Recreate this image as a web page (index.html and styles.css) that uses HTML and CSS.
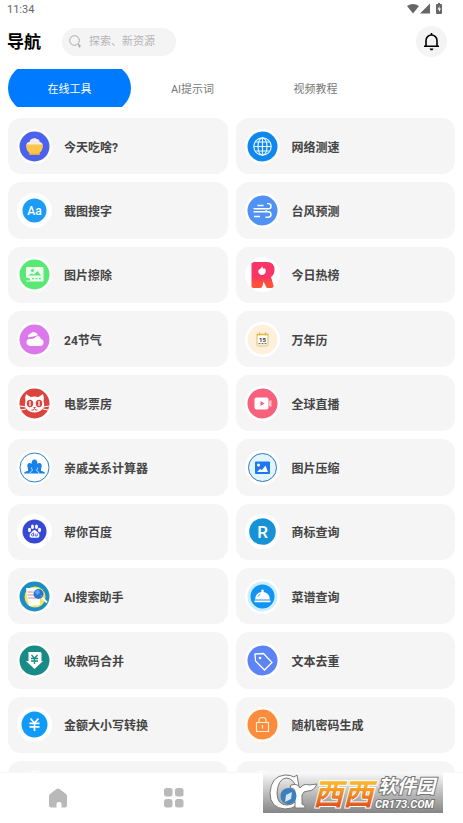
FILE: index.html
```html
<!DOCTYPE html>
<html lang="zh-CN">
<head>
    <meta charset="UTF-8">
    <meta name="viewport" content="width=device-width, initial-scale=1.0">
    <title>导航</title>
    <link rel="stylesheet" href="styles.css">
</head>
<body>
    <div class="status">
        <span>11:34</span>
        <svg width="36" height="12" viewBox="0 0 36 12" fill="#666">
            <path d="M0 3Q6-1 12 3L6 10.500z"/>
            <path d="M13 10.500L23 .500v10z"/>
            <path d="M30 1h1V0h2v1h1q1 0 1 1v8q0 1-1 1h-4q-1 0-1-1V2q0-1 1-1z"/>
            <path d="M32.500 3L30.500 6.500H32V9l2-3.500h-1.500z" fill="#fff"/>
        </svg>
    </div>

    <header class="header">
        <h1>导航</h1>
        <label class="search">
            <svg width="13" height="13" viewBox="0 0 13 13" fill="none" stroke="#aaa">
                <circle cx="5.500" cy="5.500" r="4.800"/>
                <path d="M9 9l1.500 1.500M9 11h3M10.500 9.500v3"/>
            </svg>
            <input type="text" placeholder="探索、新资源" aria-label="探索、新资源">
        </label>
        <button class="bell" aria-label="通知">
            <svg width="17" height="19" viewBox="0 0 17 19" fill="none" stroke="#000" stroke-width="1.600">
                <path d="M8.500 1v2M1 14.200h15M3 14V8.500a5.500 5.500 0 0 1 11 0V14"/>
                <path d="M6.500 16.500h4l-1 1.700h-2z" fill="#000" stroke="none"/>
            </svg>
        </button>
    </header>

    <nav class="tabs">
        <button class="tab active"><span>在线工具</span></button>
        <button class="tab"><span>AI提示词</span></button>
        <button class="tab"><span>视频教程</span></button>
    </nav>

    <main class="tools">
        <a class="card" href="#">
            <svg class="icon" viewBox="0 0 35 35">
                <circle cx="17.500" cy="17.500" r="15" fill="#4b62ee"/>
                <path d="M9.500 16q0-3 3-3 .5-3.500 4-3.500 1.500-1 3 .5 3 0 3.200 3 3 .5 2.800 3z" fill="#f6ece6"/>
                <path d="M9 15.500h17q0 6-3.500 8.500v2h-10v-2Q9 21.500 9 15.500z" fill="#fcc64c"/>
                <path d="M12.500 24.500h10V26h-10z" fill="#e9a83e"/>
            </svg>
            <span>今天吃啥?</span>
        </a>
        <a class="card" href="#">
            <svg class="icon" viewBox="0 0 35 35">
                <circle cx="17.500" cy="17.500" r="15" fill="#0f87ee"/>
                <g fill="none" stroke="#e4f6ff" stroke-width="1.200">
                    <circle cx="17.500" cy="17.500" r="8.700"/>
                    <ellipse cx="17.500" cy="17.500" rx="4.500" ry="8.700"/>
                    <path d="M17.500 9v17M9 17.500h17M10.500 13h14M10.500 22h14"/>
                </g>
            </svg>
            <span>网络测速</span>
        </a>

        <a class="card" href="#">
            <svg class="icon" viewBox="0 0 35 35">
                <circle cx="17.500" cy="17.500" r="12" fill="#1a9cf7"/>
                <text class="glyph" x="17.500" y="21.500" font-size="12">Aa</text>
            </svg>
            <span>截图搜字</span>
        </a>
        <a class="card" href="#">
            <svg class="icon" viewBox="0 0 35 35">
                <circle cx="17.500" cy="17.500" r="15" fill="#4f92f3"/>
                <path d="M12.500 12.500h6M8.500 15.800h15q2.500 0 2.500-2.600t-2.500-2.600h-1.500M8.500 18.800h10q3 0 3-1.500M12 18.800h11q3 0 3 2.700t-3 2.700h-2.500M9 23.500h6" fill="none" stroke="#fff" stroke-width="1.400"/>
            </svg>
            <span>台风预测</span>
        </a>

        <a class="card" href="#">
            <svg class="icon" viewBox="0 0 35 35">
                <circle cx="17.500" cy="17.500" r="15" fill="#58e874"/>
                <rect x="9" y="10" width="17.500" height="14.500" rx="1" fill="#effff0"/>
                <circle cx="15.500" cy="13.500" r="1.500" fill="#58e874"/>
                <path d="M11 18.500l3.500-2 2.500 1 3.500-3.500 3.500 4.500zM9 20.500l4 1v2H9zM15 21h2v1.200h-2zM18.500 21h2v1.200h-2zM22 21h2v1.200h-2z" fill="#58e874"/>
            </svg>
            <span>图片擦除</span>
        </a>
        <a class="card" href="#">
            <svg class="icon" viewBox="0 0 35 35">
                <defs>
                    <linearGradient id="hot" x2="0" y2="1">
                        <stop offset=".6" stop-color="#f93566"/>
                        <stop offset=".8" stop-color="#ff5038"/>
                    </linearGradient>
                </defs>
                <path d="M6.500 6.500Q7 5 9.500 5H22q7.500 0 7.500 8 0 4.500-3.500 7l2.500 8.500q.5 2-1.500 2.500h-4q-1.500 0-2-1.500l-2.500-5-1 4.500q-.5 2-2.500 2H8.500q-2.500 0-2-2.500z" fill="url(#hot)"/>
                <path d="M17 9q.5 2 2 3l.8-1q2 3 .2 5.500-3 3-6 0-2-3 1-4.500Q17 11 17 9z" fill="#fff"/>
            </svg>
            <span>今日热榜</span>
        </a>

        <a class="card" href="#">
            <svg class="icon" viewBox="0 0 35 35">
                <circle cx="17.500" cy="17.500" r="15" fill="#dc78eb"/>
                <path d="M11 15.500q-.5-3 2.500-4 2-2.500 5-1 2 1 2.500 3z" fill="#fff"/>
                <path d="M13 24q-3.500-.5-3.500-3.700 0-3.300 4-3.600 3 .3 5-1.700 4-2.500 5.500 2 3 1 2.500 4-.5 3-3.500 3z" fill="#fff"/>
                <path d="M11 16q6 1.500 8.500-2.500" fill="none" stroke="#dc78eb"/>
            </svg>
            <span>24节气</span>
        </a>
        <a class="card" href="#">
            <svg class="icon" viewBox="0 0 35 35">
                <circle cx="17.500" cy="17.500" r="15" fill="#fff0db"/>
                <rect x="12" y="12.500" width="11" height="11.500" rx="1.500" fill="#fff" stroke="#dfbd68"/>
                <path d="M11.500 12.500h12M14.500 10.500v3M20.500 10.500v3" stroke="#e4b642" stroke-width="1.300"/>
                <text x="17.500" y="19.800" font-size="6" font-weight="700" text-anchor="middle" fill="#333">15</text>
                <path d="M13.500 21.700h8" stroke="#555" stroke-dasharray="2 1"/>
            </svg>
            <span>万年历</span>
        </a>

        <a class="card" href="#">
            <svg class="icon" viewBox="0 0 35 35">
                <circle cx="17.500" cy="17.500" r="15" fill="#dc443f"/>
                <path d="M9 8l4.500 3q4-1 8 0L26 8q1.500 4 .5 7.500 1.500 4-.5 7-3.500 4-8.500 4T9 22.500q-2-3-.5-7Q7.500 12 9 8z" fill="#fff"/>
                <g fill="#dc443f">
                    <ellipse cx="13" cy="17.500" rx="3.200" ry="3.700"/>
                    <ellipse cx="22" cy="17.500" rx="3.200" ry="3.700"/>
                    <path d="M16 21h3l-1.500 1.500z"/>
                </g>
                <path d="M13 15v5M22 15v5M3 20l6 1M4 24l5-1M32 20l-6 1M31 24l-5-1" stroke="#fff" stroke-width="1.200"/>
                <path d="M14.500 24q2 1 3-1.500 1 2.500 3 1.500" fill="none" stroke="#dc443f"/>
            </svg>
            <span>电影票房</span>
        </a>
        <a class="card" href="#">
            <svg class="icon" viewBox="0 0 35 35">
                <circle cx="17.500" cy="17.500" r="15" fill="#f9607c"/>
                <rect x="9.500" y="11.500" width="14" height="12" rx="2" fill="#fff"/>
                <path d="M24 15l2.500-1v7L24 20z" fill="#ffc3ce"/>
                <path d="M15.500 15l4 2.500-4 2.500z" fill="#f9607c"/>
            </svg>
            <span>全球直播</span>
        </a>

        <a class="card" href="#">
            <svg class="icon" viewBox="0 0 35 35">
                <circle cx="17.500" cy="17.500" r="14.500" fill="#fff" stroke="#2482cf"/>
                <path d="M7 23.500q0-2 4-2.500v-2q-2-5.500 1.500-6 1.500 0 2 1 0-4.500 3-4.500t3 4.500q.5-1 2-1 3.500.5 1.500 6v2q4 .5 4 2.500z" fill="#1681ea"/>
                <path d="M13 23.500q0-2 2.500-3l-1.300-3M22 23.500q0-2-2.500-3l1.300-3" fill="none" stroke="#fff" stroke-width=".7"/>
            </svg>
            <span>亲戚关系计算器</span>
        </a>
        <a class="card" href="#">
            <svg class="icon" viewBox="0 0 35 35">
                <circle cx="17.500" cy="17.500" r="14" fill="#e2f4ff" stroke="#2d76c0"/>
                <rect x="10" y="11.500" width="15" height="12.500" rx="1" fill="#1d78ed"/>
                <circle cx="13.500" cy="15" r="1.500" fill="#fff"/>
                <path d="M12 22l3-3 2 1 3.500-4.500L23 22z" fill="#fff"/>
            </svg>
            <span>图片压缩</span>
        </a>

        <a class="card" href="#">
            <svg class="icon" viewBox="0 0 35 35">
                <circle cx="17.500" cy="17.500" r="12" fill="#3748d5"/>
                <g fill="#fff">
                    <ellipse cx="12.500" cy="16" rx="1.500" ry="2.200"/>
                    <ellipse cx="15.500" cy="12.700" rx="1.500" ry="2.200"/>
                    <ellipse cx="19.500" cy="12.700" rx="1.500" ry="2.200"/>
                    <ellipse cx="22.500" cy="16" rx="1.500" ry="2.200"/>
                    <path d="M17.500 16q1.500 0 2.500 1.700l2 2q1.500 4-2 4h-5q-3.500 0-2-4l2-2Q16 16 17.500 16z"/>
                </g>
                <path d="M16.500 18.500V22h-1q-1 0-1-1.200t1-1.200h1M18.200 19.500V22h2v-2.500" fill="none" stroke="#3748d5" stroke-width=".8"/>
            </svg>
            <span>帮你百度</span>
        </a>
        <a class="card" href="#">
            <svg class="icon" viewBox="0 0 35 35">
                <circle cx="17.500" cy="17.500" r="13.300" fill="#1792d6"/>
                <text class="glyph" x="17.500" y="23.500" font-size="17">R</text>
            </svg>
            <span>商标查询</span>
        </a>

        <a class="card" href="#">
            <svg class="icon" viewBox="0 0 35 35">
                <circle cx="17.500" cy="17.500" r="15" fill="#1d8ec4"/>
                <circle cx="18" cy="18" r="10.500" fill="#f2e35c"/>
                <path d="M9 9h11l3 3v14l-11 1q-2-8-3-18z" fill="#fff"/>
                <path d="M10.500 13h6M10.500 16h7M11 19h8" stroke="#e18791"/>
                <path d="M25 18.500l5 5" stroke="#fff" stroke-width="2"/>
                <circle cx="21.500" cy="15" r="5" fill="#2976d4"/>
                <path d="M18 13q2-3 4-2l1 3-3 2zM23 17l2-1v2z" fill="#57a4ee"/>
            </svg>
            <span>AI搜索助手</span>
        </a>
        <a class="card" href="#">
            <svg class="icon" viewBox="0 0 35 35">
                <circle cx="17.500" cy="17.500" r="15" fill="#caefff"/>
                <circle cx="17.500" cy="17.500" r="12" fill="#1393f2"/>
                <path d="M10 20.500q.5-7 6.500-7.500-1-2 1-2.500 2 .5 1 2.500 6 .5 6.500 7.500zM9.500 21.500h16v1.700h-16z" fill="#fff"/>
                <path d="M13 17.500q1-2 2.500-2.500" fill="none" stroke="#1393f2" stroke-width=".8"/>
            </svg>
            <span>菜谱查询</span>
        </a>

        <a class="card" href="#">
            <svg class="icon" viewBox="0 0 35 35">
                <circle cx="17.500" cy="17.500" r="15" fill="#188b86"/>
                <path d="M12 9h11q1.500 0 1.500 1.500V18H26l-8.500 8L9 18h2.500v-7.500Q10.500 9 12 9z" fill="#fff"/>
                <path d="M14.500 12l3 3.500 3-3.500M14 15.500h7M14 18h7M17.500 15.500V21" fill="none" stroke="#188b86" stroke-width="1.300"/>
            </svg>
            <span>收款码合并</span>
        </a>
        <a class="card" href="#">
            <svg class="icon" viewBox="0 0 35 35">
                <circle cx="17.500" cy="17.500" r="15" fill="#5c84f6"/>
                <path d="M10 11l8.500-.5L27 19.500 19.500 27 10.500 18z" fill="none" stroke="#fff" stroke-width="1.300"/>
                <circle cx="15" cy="15" r="1.300" fill="#fff"/>
            </svg>
            <span>文本去重</span>
        </a>

        <a class="card" href="#">
            <svg class="icon" viewBox="0 0 35 35">
                <circle cx="17.500" cy="17.500" r="13" fill="#109bf8"/>
                <path d="M13.500 11.500l4 4.500 4-4.500M12.500 16.300h10M12.500 19.800h10M17.500 16v8" fill="none" stroke="#fff" stroke-width="1.700"/>
            </svg>
            <span>金额大小写转换</span>
        </a>
        <a class="card" href="#">
            <svg class="icon" viewBox="0 0 35 35">
                <circle cx="17.500" cy="17.500" r="17.500" fill="#fffbee"/>
                <circle cx="17.500" cy="17.500" r="15" fill="#fc8c3d"/>
                <path d="M11.500 15.500h12v9h-12zM14 15.500v-2.500q0-2.500 3.500-2.500T21 13v2.500M17.500 18v3.500" fill="none" stroke="#fff0cf" stroke-width="1.200"/>
            </svg>
            <span>随机密码生成</span>
        </a>

        <a class="card" href="#"><svg class="icon" viewBox="0 0 35 35"></svg></a>
        <a class="card" href="#"><svg class="icon" viewBox="0 0 35 35"></svg></a>
    </main>

    <nav class="bottom">
        <button aria-label="首页">
            <svg width="20" height="20" viewBox="0 0 20 20" fill="#b9b9b9">
                <path d="M8.500 1q1.500-1 3 0l6.500 5q1 1 1 2v9.500q0 2-2 2h-3.500v-3.500q0-2-2-2h-1q-2 0-2 2v3.500H3q-2 0-2-2V8q0-1 1-2z"/>
            </svg>
        </button>
        <button aria-label="分类">
            <svg width="20" height="20" viewBox="0 0 20 20" fill="#b9b9b9">
                <rect y="0" width="8.500" height="8.500" rx="2.500"/>
                <rect x="11" width="8.500" height="8.500" rx="2.500"/>
                <rect y="11" width="8.500" height="8.500" rx="2.500"/>
                <rect x="11" y="11" width="8.500" height="8.500" rx="2.500"/>
            </svg>
        </button>
    </nav>

    <svg class="watermark" width="180" height="40" viewBox="0 0 180 40">
        <defs>
            <linearGradient id="plate" x2="0" y2="1">
                <stop offset="0" stop-color="#f8f8f8"/>
                <stop offset="1" stop-color="#858585"/>
            </linearGradient>
            <linearGradient id="orange" x2="0" y2="1">
                <stop offset=".2" stop-color="#f8b62c"/>
                <stop offset=".9" stop-color="#e04a1d"/>
            </linearGradient>
        </defs>
        <rect width="180" height="40" fill="url(#plate)"/>
        <path d="M34 2l2 12h-3Q30 5 23 5q-8 1-9 15 0 12 10 12 5 0 8-3l2 3q-5 4-12 4Q7 35 7 20 8 3 22 2q6 0 9 2z" fill="#fff" stroke="#777"/>
        <path d="M28 12q7-2 9 3 4-5 9-3l8-1q-3 7-9 7-5 0-6 4v9l3 2v2H32V19q0-4-5-4z" fill="#fff" stroke="#777"/>
        <circle cx="25.500" cy="23" r="8" fill="#3a80bd"/>
        <path d="M29 19l-1 7-6 3 1-7z" fill="#d5e5ee"/>
        <g class="mark">
            <text x="50" y="32" font-size="30" fill="url(#orange)" stroke="#fff" stroke-width="2">西西</text>
            <text x="115" y="20" font-size="19" fill="#fff" stroke="#777" stroke-width="2">软件园</text>
            <text x="112" y="35" font-size="11" fill="#fff" stroke="#777" stroke-width="2">CR173.COM</text>
        </g>
    </svg>
</body>
</html>
```
FILE: styles.css
```css
* {
    box-sizing: border-box;
}
body {
    display: flex;
    flex-direction: column;
    height: 100vh;
    margin: 0;
    background: #fff;
    font-family: Roboto, "Noto Sans CJK SC", sans-serif;
    font-size: 12px;
    color: #444;
}
button {
    padding: 0;
    border: none;
    background: none;
    font: inherit;
    color: inherit;
    cursor: pointer;
}
.status {
    display: flex;
    justify-content: space-between;
    align-items: center;
    height: 18px;
    padding: 0 20px 0 7px;
    font-size: 11px;
    color: #666;
}
.header {
    display: flex;
    align-items: center;
    padding: 8px 16px 12px 7px;
}
h1 {
    margin: 0;
    font-size: 17px;
    line-height: 28px;
    color: #000;
}
.search {
    display: flex;
    align-items: center;
    gap: 7px;
    width: 26%;
    height: 28px;
    margin-left: 21px;
    padding-left: 7px;
    border-radius: 14px;
    background: #f4f4f4;
}
.search svg {
    flex: none;
}
.search input {
    flex: 1;
    min-width: 0;
    padding: 0;
    border: none;
    outline: none;
    background: none;
    font: inherit;
    font-size: 11px;
}
.search input::placeholder {
    color: #b5b5b5;
}
.bell {
    display: flex;
    align-items: center;
    justify-content: center;
    width: 31px;
    height: 31px;
    margin-left: auto;
    border-radius: 50%;
    background: #f4f4f4;
}
.tabs {
    display: flex;
    margin: 0 8px 11px;
}
.tab {
    position: relative;
    width: 123px;
    height: 38px;
    overflow: hidden;
    font-size: 11px;
    color: #777;
}
.tab span {
    position: relative;
}
.active {
    color: #fff;
}
/* pill is taller than the tab, so its top and bottom are cut flat */
.active::before {
    content: "";
    position: absolute;
    inset: -5px 0;
    border-radius: 24px;
    background: #007aff;
}
.tools {
    flex: 1;
    min-height: 0;
    display: grid;
    grid-template-columns: 1fr 1fr;
    grid-template-rows: repeat(10, minmax(56px, 1fr)) 11px;
    gap: 8px;
    padding: 0 8px;
    overflow: hidden;
}
.card {
    display: flex;
    align-items: center;
    gap: 12px;
    min-height: 56px;
    padding-left: 9px;
    border-radius: 13px;
    background: #f5f5f5;
    font-weight: 700;
    color: #444;
    text-decoration: none;
}
.icon {
    width: 35px;
    height: 35px;
    border-radius: 50%;
    background: #fff;
}
.glyph {
    fill: #fff;
    font-weight: 500;
    text-anchor: middle;
}
.bottom {
    flex: none;
    display: grid;
    grid-template-columns: repeat(4, 1fr);
    height: 51px;
    border-top: 1px solid #f8f8f8;
    background: #fff;
}
.bottom button {
    display: flex;
    align-items: center;
    justify-content: center;
}
.watermark {
    position: absolute;
    right: 20px;
    bottom: 10px;
}
.mark {
    font-style: italic;
    font-weight: 700;
    paint-order: stroke;
}
```
